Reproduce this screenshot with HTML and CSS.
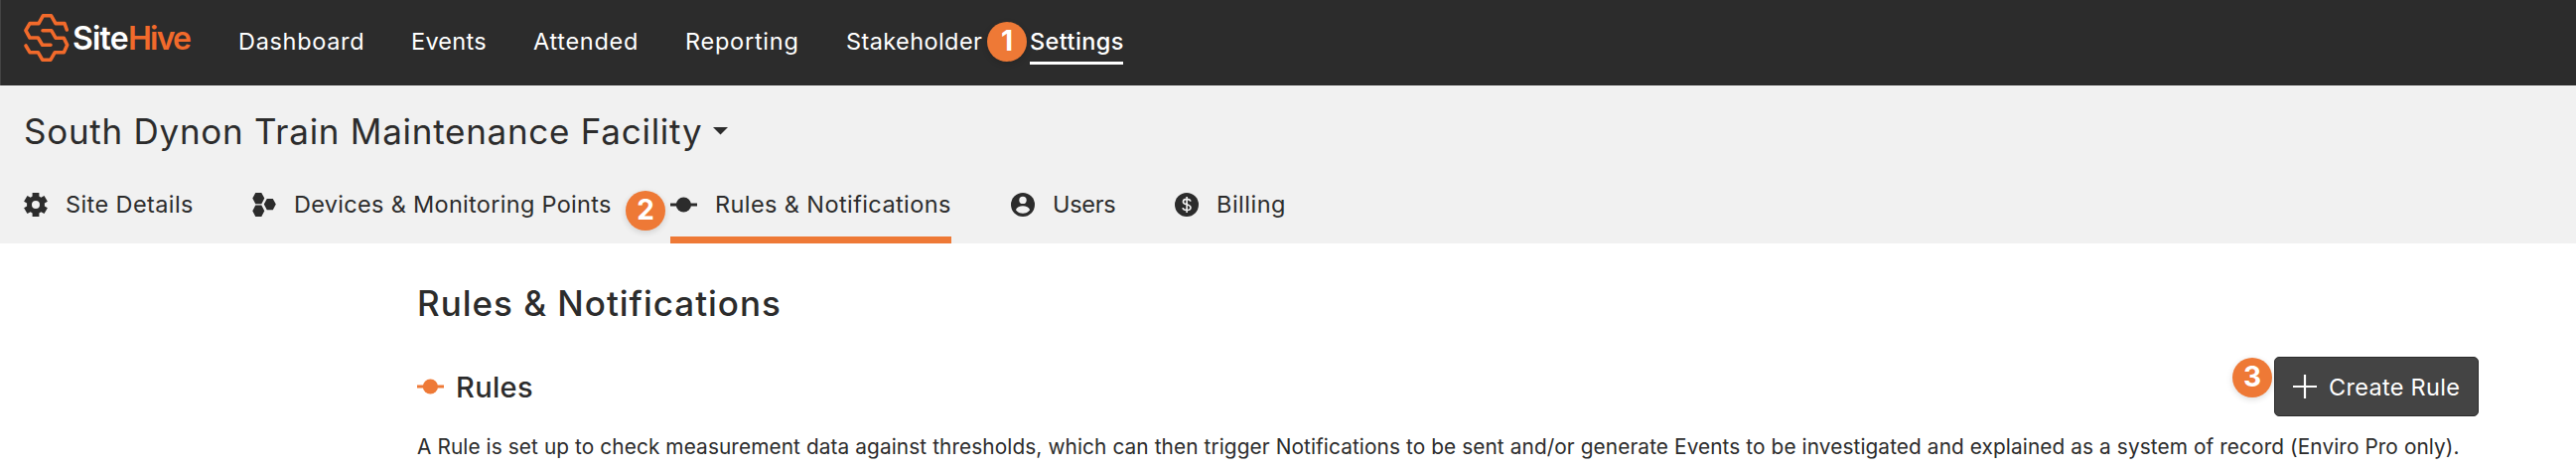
FILE: index.html
```
<!DOCTYPE html>
<html lang="en">
<head>
<meta charset="utf-8">
<title>SiteHive - Rules &amp; Notifications</title>
<link rel="stylesheet" href="styles.css">
</head>
<body>
<header class="topbar">
  <a class="logo">
    <svg class="logo-mark" viewBox="23 13 47 50" fill="none" stroke="#f26a2b" stroke-width="3.6" stroke-linecap="round" stroke-linejoin="round">
      <path d="M67.3 30 65 23.6H56L51.6 15.8H43.3L39 23.6H30L25.9 30.7 30 38H38.3L42.7 45.3H51"/>
      <path d="M26 46 30 52.7H38.3L42.7 60.2H51L55.3 52.7H64.3L67.7 45.3 64.3 38.2H56L51.7 30.7H43"/>
    </svg>
    <span class="logo-site">Site</span><span class="logo-hive">Hive</span>
  </a>
  <nav class="nav">
    <a class="nav-item dashboard">Dashboard</a>
    <a class="nav-item events">Events</a>
    <a class="nav-item attended">Attended</a>
    <a class="nav-item reporting">Reporting</a>
    <a class="nav-item stakeholder">Stakeholder</a>
    <a class="nav-item settings active">Settings<span class="badge badge-1">1</span></a>
  </nav>
</header>

<section class="subheader">
  <div class="site-title">
    <span>South Dynon Train Maintenance Facility</span>
    <svg class="caret" viewBox="0 0 15 8"><path d="M0 0H15L7.5 7.6Z" fill="#2c2c2c"/></svg>
  </div>
  <div class="tabs">
    <a class="tab details">
      <span class="tab-icon"><svg width="24" height="24" viewBox="0 0 24 24"><path fill="#2c2c2c" fill-rule="evenodd" d="M8.6 0H15.4V3.6L17.3 4.7 20.5 2.9 23.9 8.7 20.9 10.6V13.4L23.9 15.3 20.5 21.1 17.3 19.3 15.4 20.4V24H8.6V20.4L6.7 19.3 3.5 21.1.1 15.3 3.1 13.4V10.6L.1 8.7 3.5 2.9 6.7 4.7 8.6 3.6ZM12 8A4 4 0 1 0 12 16 4 4 0 1 0 12 8Z"/></svg></span>
      <span>Site Details</span>
    </a>
    <a class="tab devices">
      <span class="tab-icon"><svg width="24" height="24" viewBox="0 0 24 24" fill="#2c2c2c"><path d="M3.3 0H9.3L12.3 5.6 9.3 11.2H3.3L.3 5.6Z"/><path d="M3.3 12.6H9.3L12.3 18.3 9.3 24H3.3L.3 18.3Z"/><path d="M14.8 5.9H20.8L23.8 11.6 20.8 17.3H14.8L11.8 11.6Z"/></svg></span>
      <span>Devices &amp; Monitoring Points</span>
    </a>
    <a class="tab rules active">
      <span class="tab-icon"><svg width="27" height="16" viewBox="0 0 27 16" fill="#2c2c2c"><path d="M0 6.5H27V9.5H0Z"/><circle cx="13.4" cy="8" r="7.6"/></svg></span>
      <span>Rules &amp; Notifications</span>
      <span class="badge badge-2">2</span>
    </a>
    <a class="tab users">
      <span class="tab-icon"><svg width="24" height="24" viewBox="0 0 24 24"><circle cx="12" cy="12" r="12" fill="#2c2c2c"/><circle cx="12" cy="7.4" r="3.7" fill="#f1f1f1"/><path d="M4.9 17.2C6.5 11.9 17.5 11.9 19.1 17.2 15.8 22 8.2 22 4.9 17.2Z" fill="#f1f1f1"/></svg></span>
      <span>Users</span>
    </a>
    <a class="tab billing">
      <span class="tab-icon"><svg width="24" height="24" viewBox="0 0 24 24" fill="none"><circle cx="12" cy="12" r="12" fill="#2c2c2c"/><path d="M15.9 8.7C15.4 5.6 8.6 5.4 8.4 8.9 8.3 12.6 16.1 11 16 15 15.8 18.5 8.5 18.3 8 15.2M12.1 4V20" stroke="#f1f1f1" stroke-width="1.6"/></svg></span>
      <span>Billing</span>
    </a>
  </div>
</section>

<main class="content">
  <h1>Rules &amp; Notifications</h1>
  <div class="rules-row">
    <h2>
      <svg width="27" height="16" viewBox="0 0 27 16" fill="#ee7936"><path d="M0 6.5H27V9.5H0Z"/><circle cx="13.4" cy="8" r="7.6"/></svg>
      <span>Rules</span>
    </h2>
    <button class="create">
      <svg width="24" height="24" viewBox="0 0 24 24"><path d="M12 0V24M0 12H24" stroke="#fff" stroke-width="2.2"/></svg>
      <span>Create Rule</span>
      <span class="badge badge-3">3</span>
    </button>
  </div>
  <p>A Rule is set up to check measurement data against thresholds, which can then trigger Notifications to be sent and/or generate Events to be investigated and explained as a system of record (Enviro Pro only).</p>
</main>
</body>
</html>
```
FILE: styles.css
```
* { box-sizing: border-box; }
body {
  margin: 0;
  background: #fff;
  color: #2c2c2c;
  font: 400 23.5px Inter, sans-serif;
  white-space: nowrap;
}
svg { display: block; flex: none; }

.topbar {
  display: flex;
  height: 86px;
  background: #2c2c2c;
  border-left: 1px solid #444;
  color: #fff;
}
.logo {
  display: flex;
  align-items: center;
  width: 238px;
  height: 76px;
  padding-left: 22px;
  font-size: 32px;
  font-weight: 600;
}
.logo-mark { width: 47px; height: 50px; margin-right: 3px; }
.logo-site { width: 56px; letter-spacing: -.8px; }
.logo-hive { color: #f26a2b; letter-spacing: -1.8px; }

.nav { display: flex; gap: 48px; height: 83px; }
.nav-item { position: relative; line-height: 83px; }
.dashboard { width: 126px; padding-left: 1px; letter-spacing: .68px; }
.events { width: 76px; padding-left: 1px; letter-spacing: .25px; }
.attended { width: 105px; letter-spacing: .71px; }
.reporting { width: 114px; letter-spacing: .75px; }
.stakeholder { width: 137px; letter-spacing: .41px; }
.settings { width: 94px; letter-spacing: .4px; font-weight: 500; }
.nav-item.active::after {
  content: "";
  position: absolute;
  left: 0;
  top: 62px;
  width: 94px;
  height: 3px;
  background: #fff;
}

.badge {
  position: absolute;
  width: 40px;
  height: 40px;
  border-radius: 50%;
  background: #ee7936;
  color: #fff;
  font-size: 28px;
  font-weight: 700;
  line-height: 39px;
  letter-spacing: 0;
  text-align: center;
  box-shadow: 0 2px 6px rgba(0, 0, 0, .14);
}
.badge-1 { left: -43px; top: 22px; }
.badge-2 { left: -45px; top: 26px; }
.badge-3 { left: -43px; top: 0; }

.subheader { height: 159px; padding: 19px 24px 0; background: #f1f1f1; }
.site-title {
  display: flex;
  align-items: center;
  gap: 11px;
  height: 53px;
  margin-bottom: 8px;
  font-size: 35px;
  letter-spacing: .73px;
}
.caret { width: 15px; height: 8px; }
.tabs { display: flex; gap: 60px; height: 79px; }
.tab { display: flex; align-items: center; gap: 17px; position: relative; }
.tab-icon { flex: none; width: 25px; }
.details { width: 170px; letter-spacing: .4px; }
.devices { width: 361px; letter-spacing: .3px; }
.rules { width: 283px; gap: 18px; letter-spacing: .4px; }
.users { width: 105px; letter-spacing: -.3px; }
.billing { width: 111px; letter-spacing: .5px; }
.rules .tab-icon { width: 27px; }
.tab.active::after {
  content: "";
  position: absolute;
  left: 0;
  right: 0;
  bottom: 0;
  height: 7px;
  background: #ee7936;
}

.content { padding: 34px 98px 0 420px; }
h1 {
  margin: 0 0 27px;
  font-size: 35px;
  font-weight: 500;
  line-height: 53px;
  letter-spacing: .98px;
}
.rules-row { display: flex; justify-content: space-between; height: 60px; }
h2 {
  display: flex;
  align-items: center;
  gap: 12px;
  margin: 0;
  font-size: 29px;
  font-weight: 500;
  letter-spacing: .36px;
}
.create {
  position: relative;
  display: flex;
  align-items: center;
  gap: 12px;
  width: 206px;
  height: 60px;
  padding: 0 0 0 18px;
  border: 1px solid #2c2c2c;
  border-radius: 5px;
  background: #444;
  color: #fff;
  font: inherit;
  letter-spacing: .3px;
}
p { margin: 16px 0 0; font-size: 20.8px; line-height: 30px; letter-spacing: .1px; }
```
